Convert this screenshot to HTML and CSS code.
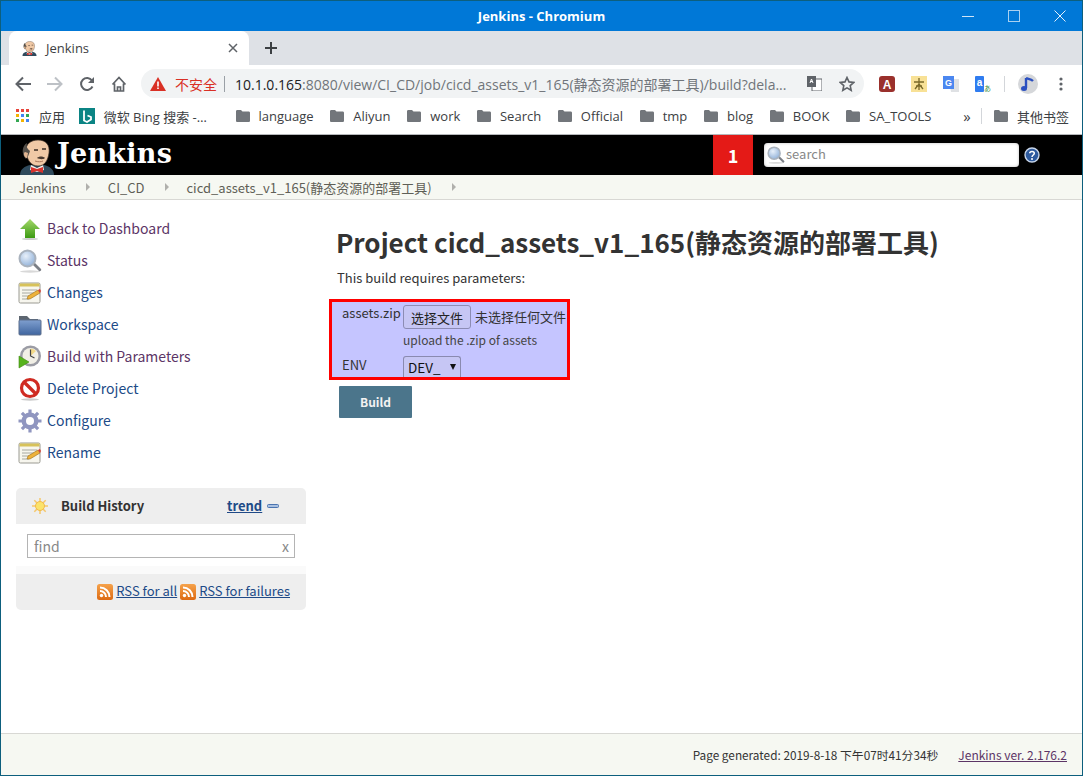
FILE: index.html
```html
<!DOCTYPE html>
<html>

<head>
    <meta charset="utf-8">
    <title>Jenkins - Chromium</title>
    <link rel="stylesheet" href="styles.css">
</head>

<body>
    <svg class="defs" width="0" height="0">
        <defs>
            <linearGradient id="g-arrow" x1="0" y1="0" x2="0" y2="1"><stop offset="0" stop-color="#a5d96b"/><stop offset="1" stop-color="#3c9a13"/></linearGradient>
            <linearGradient id="g-folder" x1="0" y1="0" x2="0" y2="1"><stop offset="0" stop-color="#7f9fcf"/><stop offset="1" stop-color="#3f659f"/></linearGradient>
            <linearGradient id="g-rss" x1="0" y1="0" x2="0" y2="1"><stop offset="0" stop-color="#f5a24b"/><stop offset="1" stop-color="#dd6a12"/></linearGradient>
            <radialGradient id="g-lens" cx=".4" cy=".35" r=".7"><stop offset="0" stop-color="#e8f0fa"/><stop offset="1" stop-color="#8fb0d8"/></radialGradient>
            <symbol id="i-butler" viewBox="0 0 36 36">
                <path d="M1 36c0-6 5-9 10-10h14c5 1 10 4 10 10z" fill="#2f4a5c"/>
                <path d="M12 26l6 3 6-3 1 5-7 2-7-2z" fill="#f4f1ea"/>
                <path d="M12 28l6 2 6-2v6l-6-2-6 2z" fill="#d8322c"/>
                <path d="M7 13C6 5 12 1 19 1c8 0 12 5 11 13-1 7-4 13-11 13-7 0-11-6-12-14z" fill="#f0c9a6" stroke="#3a2c24" stroke-width=".7"/>
                <path d="M7 20C2 15 3 7 8 4c-1 3 0 6 3 8-1 3-2 6-4 8z" fill="#55504a"/>
                <path d="M6 13c-2 1-1 6 2 6l1-5z" fill="#e2b592"/>
                <path d="M18 19c2-2 6-2 8 0-2 2-6 1-8 0z" fill="#4a3a30"/>
                <path d="M15 11h4M23 10h4" stroke="#3a2c24" stroke-width="1.400" fill="none"/>
                <path d="M16 22c3 1 6 1 8 0" stroke="#a9765a" stroke-width="1" fill="none"/>
            </symbol>
            <symbol id="i-lens" viewBox="0 0 24 24">
                <ellipse cx="12" cy="22.500" rx="10" ry="1.200" fill="#d8d8d8"/>
                <path d="M14 15l2-2 7 7c1 1-1 3-2 2z" fill="#7b7f86"/>
                <circle cx="9.500" cy="9.500" r="8" fill="url(#g-lens)" stroke="#a9b2bd" stroke-width="2"/>
            </symbol>
            <symbol id="i-note" viewBox="0 0 24 24">
                <rect x="1" y="2" width="21" height="20" rx="1.500" fill="#f7f6ee" stroke="#9a9a92"/>
                <path d="M1.500 2.500h20v3h-20z" fill="#d7c25a"/>
                <path d="M4 9h15M4 12h12M4 15h9M4 18h7" stroke="#a8a8a0" stroke-width="1"/>
                <path d="M9 18l1-3 10-6 2 3-10 6z" fill="#eeb23b" stroke="#9a6f1c" stroke-width=".6"/>
                <path d="M20 9l2-1 1 2-1 2z" fill="#d8443a"/>
            </symbol>
            <symbol id="i-folder" viewBox="0 0 24 24">
                <path d="M1 3h8l3 3h8v4H1z" fill="#5d6670"/>
                <rect x="1" y="7" width="22" height="15" rx="1" fill="url(#g-folder)" stroke="#5c6f8c"/>
            </symbol>
            <symbol id="i-clock" viewBox="0 0 24 24">
                <circle cx="12.500" cy="11" r="10.500" fill="#9b9ca5"/>
                <circle cx="12.500" cy="11" r="8" fill="#f1efe6"/>
                <path d="M12.500 11V3.500A7.500 7.500 0 0 1 18 6z" fill="#f2d989"/>
                <path d="M12.500 4.500V11l4 2" stroke="#444" stroke-width="1.200" fill="none"/>
                <path d="M1 11l10 6-10 6z" fill="#57b31d" stroke="#3f8a10" stroke-width=".6"/>
            </symbol>
            <symbol id="i-no" viewBox="0 0 24 24">
                <ellipse cx="12" cy="22.500" rx="9" ry="1.200" fill="#ccc"/>
                <circle cx="12" cy="11" r="8.500" fill="#fff" stroke="#cf2b22" stroke-width="3.200"/>
                <path d="M6 5l12 12" stroke="#cf2b22" stroke-width="3.400"/>
            </symbol>
            <symbol id="i-gear" viewBox="0 0 24 24">
                <circle cx="12" cy="12" r="6" fill="none" stroke="#9096c0" stroke-width="5"/>
                <path d="M12 .5v23M.5 12h23M3.900 3.900l16.200 16.200M20.100 3.900L3.900 20.100" stroke="#9096c0" stroke-width="3.200"/>
                <circle cx="12" cy="12" r="4" fill="#fff"/>
            </symbol>
            <symbol id="i-rss" viewBox="0 0 16 16">
                <rect width="16" height="16" rx="2.500" fill="url(#g-rss)"/>
                <circle cx="4.500" cy="11.500" r="1.700" fill="#fff"/>
                <path d="M3 7a6 6 0 0 1 6 6M3 3.500A9.500 9.500 0 0 1 12.500 13" stroke="#fff" stroke-width="2" fill="none"/>
            </symbol>
            <symbol id="i-chromefolder" viewBox="0 0 14 12">
                <path d="M1.300 0H5l1.500 1.500h6.200c.7 0 1.300.6 1.300 1.300v7.900c0 .7-.6 1.300-1.300 1.300H1.300C.6 12 0 11.400 0 10.700V1.300C0 .6.600 0 1.300 0z" fill="#72767b"/>
            </symbol>
        </defs>
    </svg>

    <div class="window">
        <div class="titlebar">
            <span class="title">Jenkins - Chromium</span>
            <div class="winctl">
                <svg width="12" height="12"><path d="M0 6.500h12" stroke="#cfe4f7" stroke-width="1"/></svg>
                <svg width="12" height="12"><rect x=".5" y=".5" width="11" height="11" fill="none" stroke="#a9d0f0"/></svg>
                <svg width="12" height="12"><path d="M.5.500l11 11M11.500.500l-11 11" stroke="#e6f1fb" stroke-width="1"/></svg>
            </div>
        </div>

        <div class="tabstrip">
            <div class="tab">
                <svg class="favicon" width="15" height="15"><use href="#i-butler"/></svg>
                <span class="tab-name">Jenkins</span>
                <svg class="tab-x" width="10" height="10"><path d="M1 1l8 8M9 1l-8 8" stroke="#5f6368" stroke-width="1.500"/></svg>
            </div>
            <svg class="newtab" width="12" height="12"><path d="M6 0v12M0 6h12" stroke="#3c4043" stroke-width="2"/></svg>
        </div>

        <div class="toolbar">
            <div class="nav">
                <svg width="16" height="16" viewBox="0 0 16 16"><path d="M16 8H2M8 1.500L1.500 8 8 14.500" stroke="#5f6368" stroke-width="2" fill="none"/></svg>
                <svg width="16" height="16" viewBox="0 0 16 16"><path d="M0 8h14M8 1.500L14.500 8 8 14.500" stroke="#bdc1c6" stroke-width="2" fill="none"/></svg>
                <svg width="16" height="16" viewBox="0 0 16 16"><path d="M13.500 10.500A6 6 0 1 1 13 4.500" stroke="#5f6368" stroke-width="2" fill="none"/><path d="M15 1v6H9z" fill="#5f6368"/></svg>
                <svg width="16" height="16" viewBox="0 0 16 16"><path d="M1.500 8.500L8 1.500l6.500 7M3.500 7.500V15h9V7.500M6.500 15v-4h3v4" stroke="#5f6368" stroke-width="1.700" fill="none"/></svg>
            </div>
            <div class="omnibox">
                <svg width="16" height="14" viewBox="0 0 16 14"><path d="M8 0l8 14H0z" fill="#d93025"/><path d="M7.200 4.500h1.600v5H7.200zM7.200 10.500h1.600v1.600H7.200z" fill="#fff"/></svg>
                <span class="insecure">不安全</span>
                <span class="omni-sep"></span>
                <span class="url"><b>10.1.0.165</b>:8080/view/CI_CD/job/cicd_assets_v1_165(静态资源的部署工具)/build?dela...</span>
                <svg class="omni-tr" width="15" height="15" viewBox="0 0 15 15"><rect x="5" y="3" width="10" height="12" fill="#fff" stroke="#5f6368"/><rect width="9" height="11" fill="#5f6368"/><path d="M3 7l1.500-4L6 7M3.500 5.500h2" stroke="#fff" fill="none"/></svg>
                <svg class="omni-star" width="16" height="16" viewBox="0 0 16 16"><path d="M8 1.500l2 4.400 4.800.5-3.600 3.200 1 4.700L8 11.900 3.800 14.300l1-4.700L1.200 6.400 6 5.900z" fill="none" stroke="#5f6368" stroke-width="1.600"/></svg>
            </div>
            <div class="exts">
                <svg width="16" height="16" viewBox="0 0 16 16"><rect width="16" height="16" rx="3" fill="#9a302c"/><text class="ext-t" x="8" y="12.500" font-size="12" fill="#fff" text-anchor="middle">A</text></svg>
                <svg width="16" height="16" viewBox="0 0 16 16"><rect width="16" height="16" fill="#f8e196"/><path d="M8 2v12M3 6h10M4 13l4-5 4 5M5 10h6" stroke="#7a6a2a" stroke-width="1.300" fill="none"/></svg>
                <svg width="16" height="16" viewBox="0 0 16 16"><path d="M6 3h10v13H8z" fill="#dfe1e4"/><path d="M0 0h11v13H0z" fill="#4b87f0"/><text class="ext-t" x="5.500" y="9.500" font-size="9" fill="#fff" text-anchor="middle">G</text></svg>
                <svg width="16" height="16" viewBox="0 0 16 16"><rect width="9" height="16" rx="1" fill="#2f7cf0"/><text class="ext-t" x="4.500" y="10" font-size="10" fill="#fff" text-anchor="middle">a</text><text x="12.500" y="15" font-size="7" fill="#3a8a3a" text-anchor="middle" font-family="Noto Sans CJK JP">あ</text></svg>
                <span class="ext-sep"></span>
                <span class="avatar"><svg width="14" height="16" viewBox="0 0 14 16"><path d="M5 2v10M5 2c2 1 5 1 7 3" stroke="#2a4fc0" stroke-width="2.400" fill="none"/><ellipse cx="3" cy="12.500" rx="3" ry="2.500" fill="#2a4fc0"/></svg></span>
                <svg class="dots" width="4" height="14"><circle cx="2" cy="2" r="1.600" fill="#5f6368"/><circle cx="2" cy="7" r="1.600" fill="#5f6368"/><circle cx="2" cy="12" r="1.600" fill="#5f6368"/></svg>
            </div>
        </div>

        <div class="bookmarks">
            <span class="bm bm-apps">
                <svg width="14" height="14" viewBox="0 0 14 14">
                    <path d="M0 0h3v3H0z" fill="#e8453c"/><path d="M5 0h3v3H5z" fill="#e8453c"/><path d="M10 0h3v3h-3z" fill="#e8453c"/>
                    <path d="M0 5h3v3H0z" fill="#f4b400"/><path d="M5 5h3v3H5z" fill="#4285f4"/><path d="M10 5h3v3h-3z" fill="#34a853"/>
                    <path d="M0 10h3v3H0z" fill="#34a853"/><path d="M5 10h3v3H5z" fill="#f4b400"/><path d="M10 10h3v3h-3z" fill="#4285f4"/>
                </svg>
                应用
            </span>
            <span class="bm bm-bing">
                <svg width="16" height="16" viewBox="0 0 16 16"><rect width="16" height="16" fill="#0b8484"/><path d="M5 2.500v10l3 1.500 4-2.500V9L8.500 7.500" stroke="#fff" stroke-width="1.800" fill="none"/></svg>
                微软 Bing 搜索 -…
            </span>
            <span class="bm"><svg width="14" height="12"><use href="#i-chromefolder"/></svg>language</span>
            <span class="bm"><svg width="14" height="12"><use href="#i-chromefolder"/></svg>Aliyun</span>
            <span class="bm"><svg width="14" height="12"><use href="#i-chromefolder"/></svg>work</span>
            <span class="bm"><svg width="14" height="12"><use href="#i-chromefolder"/></svg>Search</span>
            <span class="bm"><svg width="14" height="12"><use href="#i-chromefolder"/></svg>Official</span>
            <span class="bm"><svg width="14" height="12"><use href="#i-chromefolder"/></svg>tmp</span>
            <span class="bm"><svg width="14" height="12"><use href="#i-chromefolder"/></svg>blog</span>
            <span class="bm"><svg width="14" height="12"><use href="#i-chromefolder"/></svg>BOOK</span>
            <span class="bm"><svg width="14" height="12"><use href="#i-chromefolder"/></svg>SA_TOOLS</span>
            <span class="bm-more">»</span>
            <span class="bm-sep"></span>
            <span class="bm"><svg width="14" height="12"><use href="#i-chromefolder"/></svg>其他书签</span>
        </div>

        <div class="header">
            <svg class="logo" width="36" height="36"><use href="#i-butler"/></svg>
            <span class="logo-text">Jenkins</span>
            <span class="badge">1</span>
            <div class="search">
                <svg width="18" height="18"><use href="#i-lens"/></svg>
                <span>search</span>
            </div>
            <svg class="help" width="16" height="16" viewBox="0 0 16 16"><circle cx="8" cy="8" r="7" fill="#2d5a9e" stroke="#c8d6ea" stroke-width="1.400"/><path d="M5.700 6.300C5.800 3.800 10.300 3.800 10.300 6.300 10.300 8 8 8 8 10" stroke="#fff" stroke-width="1.500" fill="none"/><circle cx="8" cy="12" r="1" fill="#fff"/></svg>
        </div>

        <div class="breadcrumbs">
            <span>Jenkins</span><i class="crumb-arrow"></i>
            <span>CI_CD</span><i class="crumb-arrow"></i>
            <span>cicd_assets_v1_165(静态资源的部署工具)</span><i class="crumb-arrow"></i>
        </div>

        <div class="page">
            <div class="side">
                <ul class="tasks">
                    <li><svg width="24" height="24" viewBox="0 0 24 24"><path d="M12 2l10 10h-5v9H7v-9H2z" fill="url(#g-arrow)"/><ellipse cx="12" cy="22" rx="8" ry="1" fill="#ccc"/></svg><a class="seen">Back to Dashboard</a></li>
                    <li><svg width="24" height="24"><use href="#i-lens"/></svg><a class="seen">Status</a></li>
                    <li><svg width="24" height="24"><use href="#i-note"/></svg><a>Changes</a></li>
                    <li><svg width="24" height="24"><use href="#i-folder"/></svg><a>Workspace</a></li>
                    <li><svg width="24" height="24"><use href="#i-clock"/></svg><a class="seen">Build with Parameters</a></li>
                    <li><svg width="24" height="24"><use href="#i-no"/></svg><a>Delete Project</a></li>
                    <li><svg width="24" height="24"><use href="#i-gear"/></svg><a>Configure</a></li>
                    <li><svg width="24" height="24"><use href="#i-note"/></svg><a>Rename</a></li>
                </ul>

                <div class="history">
                    <div class="history-head">
                        <svg width="16" height="16" viewBox="0 0 16 16"><path d="M8 0v16M0 8h16M2.300 2.300l11.400 11.400M13.700 2.300L2.300 13.700" stroke="#f5c76a" stroke-width="1.500"/><circle cx="8" cy="8" r="4.500" fill="#fbe36a" stroke="#f2b94a"/></svg>
                        <b>Build History</b>
                        <a class="trend">trend</a>
                        <svg class="trend-min" width="12" height="4"><rect x=".5" y=".5" width="11" height="3" rx="1" fill="#a9c0e0" stroke="#4a74b0"/></svg>
                    </div>
                    <div class="history-body">
                        <div class="find"><span>find</span><span>x</span></div>
                    </div>
                    <div class="history-foot">
                        <svg width="16" height="16"><use href="#i-rss"/></svg><a>RSS for all</a>
                        <svg width="16" height="16"><use href="#i-rss"/></svg><a>RSS for failures</a>
                    </div>
                </div>
            </div>

            <div class="main">
                <h1>Project cicd_assets_v1_165(静态资源的部署工具)</h1>
                <p class="intro">This build requires parameters:</p>
                <div class="params">
                    <div class="param-label">assets.zip</div>
                    <div class="param-file"><span class="filebtn">选择文件</span><span class="nofile">未选择任何文件</span></div>
                    <div></div>
                    <div class="param-help">upload the .zip of assets</div>
                    <div class="param-label env">ENV</div>
                    <div class="selectbox"><span>DEV_</span><i class="select-arrow"></i></div>
                </div>
                <div class="buildbtn">Build</div>
            </div>
        </div>

        <div class="footer">
            <span class="generated">Page generated: 2019-8-18 下午07时41分34秒</span>
            <a>Jenkins ver. 2.176.2</a>
        </div>
    </div>
</body>

</html>
```

FILE: styles.css
```css
* {
    box-sizing: border-box;
}

html,
body {
    margin: 0;
    padding: 0;
}

body {
    font-family: "Noto Sans CJK SC", "Noto Sans", sans-serif;
    font-size: 14px;
    color: #333;
    background: #fff;
}

.defs {
    position: absolute;
}

a {
    color: #204a87;
}

svg {
    flex: none;
    display: block;
}

.window {
    width: 1083px;
    height: 776px;
    display: flex;
    flex-direction: column;
    border: 1px solid #0d5f7d;
    overflow: hidden;
}

.titlebar {
    height: 30px;
    background: #0078d7;
    display: flex;
    align-items: center;
    justify-content: center;
    position: relative;
    flex: none;
}

.title {
    color: #fff;
    font: bold 13px "Open Sans", sans-serif;
}

.winctl {
    position: absolute;
    right: 16px;
    top: 9px;
    display: flex;
    gap: 34px;
}

.tabstrip {
    height: 34px;
    flex: none;
    background: #dee1e6;
    display: flex;
    align-items: center;
    padding-left: 8px;
}

.tab {
    width: 240px;
    height: 34px;
    background: #fff;
    border-radius: 8px 8px 0 0;
    display: flex;
    align-items: center;
    padding: 0 11px 0 13px;
}

.tab-name {
    font: 13px "Open Sans", sans-serif;
    color: #3c4043;
    margin-left: 9px;
    flex: 1;
}

.newtab {
    margin-left: 16px;
}

.toolbar {
    height: 37px;
    flex: none;
    background: #fff;
    display: flex;
    align-items: center;
}

.nav {
    display: flex;
    gap: 16px;
    padding-left: 14px;
    width: 140px;
}

.omnibox {
    width: 723px;
    height: 29px;
    background: #f1f3f4;
    border-radius: 15px;
    display: flex;
    align-items: center;
    padding: 0 9px 0 9px;
}

.insecure {
    color: #d93025;
    font: 14px "Noto Sans CJK SC", sans-serif;
    margin-left: 9px;
}

.omni-sep {
    width: 1px;
    height: 16px;
    background: #9aa0a6;
    margin: 0 10px 0 7px;
}

.url {
    font: 14px "Open Sans", "Noto Sans CJK SC", sans-serif;
    color: #70757a;
    flex: 1;
    white-space: nowrap;
    overflow: hidden;
}

.url b {
    font-weight: 400;
    color: #202124;
}

.omni-star {
    margin-left: 17px;
}

.exts {
    display: flex;
    align-items: center;
    margin-left: 15px;
    gap: 16px;
}

.ext-t {
    font-family: "Liberation Sans", sans-serif;
    font-weight: 700;
}

.ext-sep {
    width: 1px;
    height: 16px;
    background: #d3d6da;
    margin-left: -3px;
    margin-right: -3px;
}

.avatar {
    width: 20px;
    height: 20px;
    border-radius: 50%;
    background: #d5d7da;
    display: flex;
    align-items: center;
    justify-content: center;
}

.dots {
    margin-left: 5px;
}

.bookmarks {
    height: 33px;
    flex: none;
    background: #fff;
    border-bottom: 1px solid #b5b7ba;
    display: flex;
    align-items: center;
    padding: 0 0 4px 15px;
    gap: 16.700px;
    font: 13px "Open Sans", "Noto Sans CJK SC", sans-serif;
    color: #3c4043;
    white-space: nowrap;
}

.bm {
    display: flex;
    align-items: center;
    gap: 9px;
}

.bm-apps {
    margin-right: -3px;
}

.bm-bing {
    margin-right: 12px;
}

.bm-more {
    margin-left: 15px;
    font-size: 15px;
    line-height: 1;
}

.bm-sep {
    width: 1px;
    height: 16px;
    background: #d3d6da;
    margin: 0 -5px 0 -6px;
}

.header {
    height: 40px;
    flex: none;
    background: #000;
    display: flex;
    align-items: center;
    padding-left: 18px;
}

.logo {
    align-self: flex-end;
}

.logo-text {
    font: bold 27px "DejaVu Serif", serif;
    letter-spacing: .25px;
    color: #fff;
    margin: 0 0 4px 2px;
    width: 656px;
}

.badge {
    width: 40px;
    height: 40px;
    background: #e41a17;
    color: #fff;
    font-weight: 700;
    font-size: 18px;
    display: flex;
    align-items: center;
    justify-content: center;
}

.search {
    width: 255px;
    height: 24px;
    margin-left: 11px;
    background: #fff;
    border-radius: 4px;
    box-shadow: inset 0 0 3px #bbb;
    display: flex;
    align-items: center;
    padding-left: 3px;
    color: #888;
    font-size: 13px;
    gap: 1px;
}

.search span {
    margin-top: -4px;
}

.help {
    margin-left: 5px;
}

.breadcrumbs {
    height: 25px;
    flex: none;
    background: #f6f8f2;
    border-bottom: 1px solid #d8d8d4;
    display: flex;
    align-items: center;
    padding-left: 18px;
    font-size: 13px;
    color: #5f5f56;
}

.crumb-arrow {
    width: 0;
    height: 0;
    border-left: 4px solid #b0b0ac;
    border-top: 4px solid transparent;
    border-bottom: 4px solid transparent;
    margin: 0 17.500px 0 20.500px;
}

.page {
    flex: 1;
    display: flex;
    min-height: 0;
}

.side {
    width: 320px;
    flex: none;
    padding: 13px 0 0 15px;
}

.tasks {
    list-style: none;
    margin: 0;
    padding: 0;
}

.tasks li {
    height: 32px;
    display: flex;
    align-items: center;
    gap: 5px;
    padding-left: 2px;
    font-size: 14px;
}

.tasks a {
    margin-top: -2px;
}

.tasks a.seen {
    color: #5c3566;
}

.history {
    width: 290px;
    margin-top: 19px;
    border-radius: 5px;
    overflow: hidden;
    background: #eee;
}

.history-head {
    height: 36px;
    display: flex;
    align-items: center;
    padding-left: 16px;
}

.history-head b {
    margin: -2px 0 0 13px;
    width: 166px;
    color: #333;
    font-size: 13px;
}

.trend {
    margin-top: -2px;
    font-weight: 700;
    text-decoration: underline;
    font-size: 13px;
}

.trend-min {
    margin-left: 5px;
}

.history-body {
    height: 50px;
    background: #fff;
    border-bottom: 8px solid #fafafa;
    padding: 10px 11px 0;
}

.find {
    height: 24px;
    border: 1px solid #b4b4b4;
    display: flex;
    justify-content: space-between;
    align-items: center;
    padding: 0 5px 0 6px;
    color: #888;
    font-size: 14px;
}

.history-foot {
    height: 36px;
    display: flex;
    align-items: center;
    justify-content: flex-end;
    padding-right: 16px;
    gap: 3px;
    font-size: 13px;
}

.history-foot a {
    margin-top: -3px;
    text-decoration: underline;
}

.main {
    flex: 1;
    padding-top: 24px;
    padding-left: 16px;
}

h1 {
    margin: 0 0 0 -1px;
    font-size: 26px;
    line-height: 36px;
    font-weight: 700;
    color: #333;
    white-space: nowrap;
}

.intro {
    margin: 8px 0 0;
    line-height: 20px;
    font-size: 13px;
}

.params {
    width: 241px;
    height: 81px;
    margin-top: 11px;
    margin-left: -8px;
    border: 3px solid #f00;
    background: #c5c5ff;
    display: grid;
    grid-template-columns: 61px 1fr;
    grid-template-rows: 25px 20px 1fr;
    padding: 3px 0 0 10px;
    overflow: hidden;
    font-size: 13px;
    color: #333;
}

.param-label {
    line-height: 16px;
}

.param-file {
    display: flex;
    align-items: flex-start;
    white-space: nowrap;
}

.filebtn {
    width: 68px;
    height: 24px;
    border: 1px solid #8c8cb4;
    border-radius: 3px;
    background: #c6c6f4;
    display: flex;
    align-items: center;
    justify-content: center;
    color: #222;
}

.nofile {
    margin-left: 4px;
    margin-top: 3px;
    line-height: 18px;
}

.param-help {
    grid-column: 2;
    font-size: 12px;
    line-height: 20px;
    color: #444;
}

.env {
    padding-top: 7px;
}

.selectbox {
    width: 58px;
    height: 21px;
    border: 1px solid #8a8ab0;
    border-bottom: 0;
    border-radius: 3px 3px 0 0;
    margin-top: 6px;
    background: #c6c6f4;
    display: flex;
    align-items: center;
    padding-left: 4px;
    color: #111;
    font-size: 13.500px;
}

.select-arrow {
    width: 0;
    height: 0;
    border-top: 6px solid #111;
    border-left: 3.500px solid transparent;
    border-right: 3.500px solid transparent;
    margin-left: 9px;
}

.buildbtn {
    width: 73px;
    height: 32px;
    margin-top: 6px;
    margin-left: 2px;
    padding-bottom: 2px;
    background: #4b758b;
    border-radius: 1px;
    color: #f2f2f2;
    font-weight: 700;
    font-size: 12px;
    display: flex;
    align-items: center;
    justify-content: center;
}

.footer {
    height: 42px;
    flex: none;
    background: #f6f8f2;
    border-top: 1px solid #d8d8d4;
    display: flex;
    align-items: center;
    justify-content: flex-end;
    gap: 20px;
    padding-right: 15px;
    font-size: 12px;
}

.generated {
    font-size: 11.800px;
}

.footer a {
    color: #5c3566;
    text-decoration: underline;
}
```
